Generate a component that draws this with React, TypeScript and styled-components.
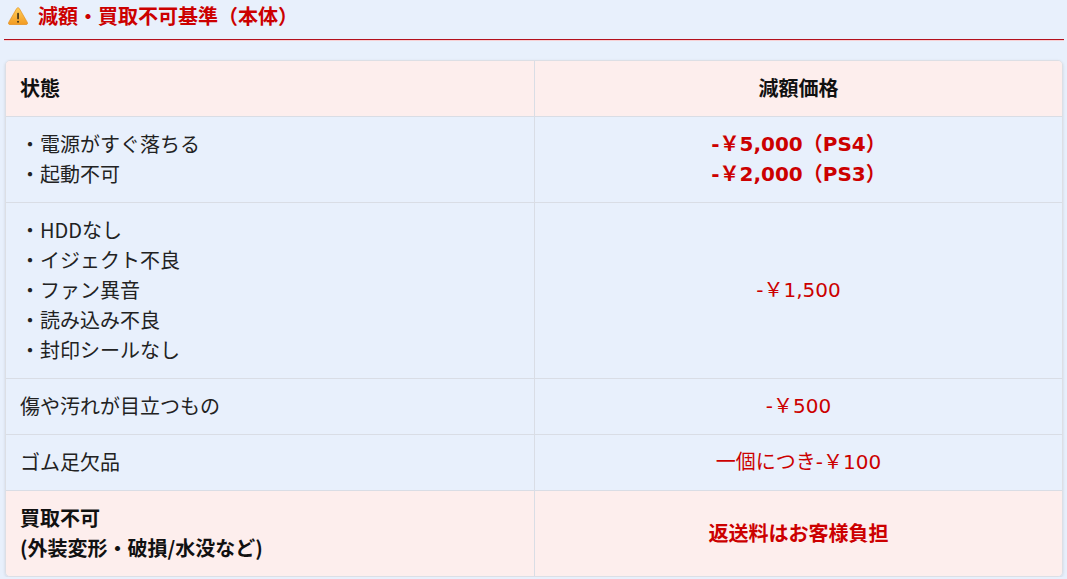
import React from "react";
import styled, { createGlobalStyle } from "styled-components";

const GlobalStyle = createGlobalStyle`
  html, body {
    margin: 0;
    padding: 0;
    background-color: #e8f0fc;
  }
  body {
    font-family: "Noto Sans CJK JP", "Noto Sans", sans-serif;
    color: #222;
  }
`;

const Page = styled.div`
  padding: 0 3px 0 4px;
`;

const Heading = styled.h2`
  display: flex;
  align-items: center;
  gap: 10px;
  margin: 0;
  padding: 0 0 7px 4px;
  height: 32px;
  border-bottom: 1px solid #b3101c;
  box-shadow: 0 1px 0 #f6d0d4;
  font-size: 20px;
  font-weight: 700;
  line-height: 32px;
  color: #cc0000;
`;

const Table = styled.table`
  width: calc(100% - 2px);
  margin: 20px 1px 0;
  border-collapse: separate;
  border-spacing: 0;
  border: 1px solid #dcdfe5;
  border-radius: 5px;
  overflow: hidden;
  box-shadow: 0 1px 3px rgba(0, 0, 0, 0.12);
  font-size: 20px;
  line-height: 30px;
`;

const Row = styled.tr<{ $tone?: "pink" | "blue" }>`
  background-color: ${(p) => (p.$tone === "pink" ? "#fdeeed" : "#e8f0fc")};
`;

const Cell = styled.td<{ $align?: "left" | "center"; $last?: boolean }>`
  width: 50%;
  padding: 12px 14px 13px;
  vertical-align: middle;
  text-align: ${(p) => p.$align || "left"};
  border-bottom: ${(p) => (p.$last ? "none" : "1px solid #d9dde5")};
  & + & {
    border-left: 1px solid #d9dde5;
  }
`;

const HeadCell = styled(Cell).attrs({ as: "th" })`
  font-weight: 700;
  color: #111;
`;

const Label = styled.div<{ $bold?: boolean }>`
  font-weight: ${(p) => (p.$bold ? 700 : 400)};
  color: ${(p) => (p.$bold ? "#111" : "#222")};
`;

const Price = styled.div<{ $bold?: boolean }>`
  font-family: "DejaVu Sans", "Noto Sans CJK JP", sans-serif;
  color: #cc0000;
  font-weight: ${(p) => (p.$bold ? 700 : 400)};
`;

const Notice = styled.div`
  color: #cc0000;
  font-weight: 700;
`;

const WarningIcon = () => (
  <svg width="20" height="18" viewBox="0 0 19 17">
    <defs>
      <linearGradient id="warn" x1="0" y1="0" x2="0" y2="1">
        <stop offset="0" stopColor="#ffcf5a" />
        <stop offset="1" stopColor="#f29a22" />
      </linearGradient>
    </defs>
    <path
      d="M8.2 1.4c.6-1 2-1 2.6 0l7.6 13.2c.6 1-.1 2.2-1.3 2.2H1.9c-1.2 0-1.9-1.2-1.3-2.2z"
      fill="url(#warn)"
      stroke="#e08a1a"
      strokeWidth="0.6"
    />
    <rect x="8.7" y="5.5" width="1.7" height="6.2" rx="0.8" fill="#4a3a1a" />
    <circle cx="9.55" cy="13.9" r="1" fill="#4a3a1a" />
  </svg>
);

const rows: { items: string[]; bullet: boolean; prices: string[]; boldPrice?: boolean }[] = [
  { items: ["電源がすぐ落ちる", "起動不可"], bullet: true, prices: ["-￥5,000（PS4）", "-￥2,000（PS3）"], boldPrice: true },
  {
    items: ["HDDなし", "イジェクト不良", "ファン異音", "読み込み不良", "封印シールなし"],
    bullet: true,
    prices: ["-￥1,500"],
  },
  { items: ["傷や汚れが目立つもの"], bullet: false, prices: ["-￥500"] },
  { items: ["ゴム足欠品"], bullet: false, prices: ["一個につき-￥100"] },
];

export default function App() {
  return (
    <Page>
      <GlobalStyle />
      <Heading>
        <WarningIcon />
        減額・買取不可基準（本体）
      </Heading>
      <Table>
        <tbody>
          <Row $tone="pink">
            <HeadCell $align="left">状態</HeadCell>
            <HeadCell $align="center">減額価格</HeadCell>
          </Row>
          {rows.map((r, i) => (
            <Row key={i}>
              <Cell>
                {r.items.map((it) => (
                  <Label key={it}>{r.bullet ? `・${it}` : it}</Label>
                ))}
              </Cell>
              <Cell $align="center">
                {r.prices.map((p) => (
                  <Price key={p} $bold={r.boldPrice}>
                    {p}
                  </Price>
                ))}
              </Cell>
            </Row>
          ))}
          <Row $tone="pink">
            <Cell $last>
              <Label $bold>買取不可</Label>
              <Label $bold>(外装変形・破損/水没など)</Label>
            </Cell>
            <Cell $align="center" $last>
              <Notice>返送料はお客様負担</Notice>
            </Cell>
          </Row>
        </tbody>
      </Table>
    </Page>
  );
}
